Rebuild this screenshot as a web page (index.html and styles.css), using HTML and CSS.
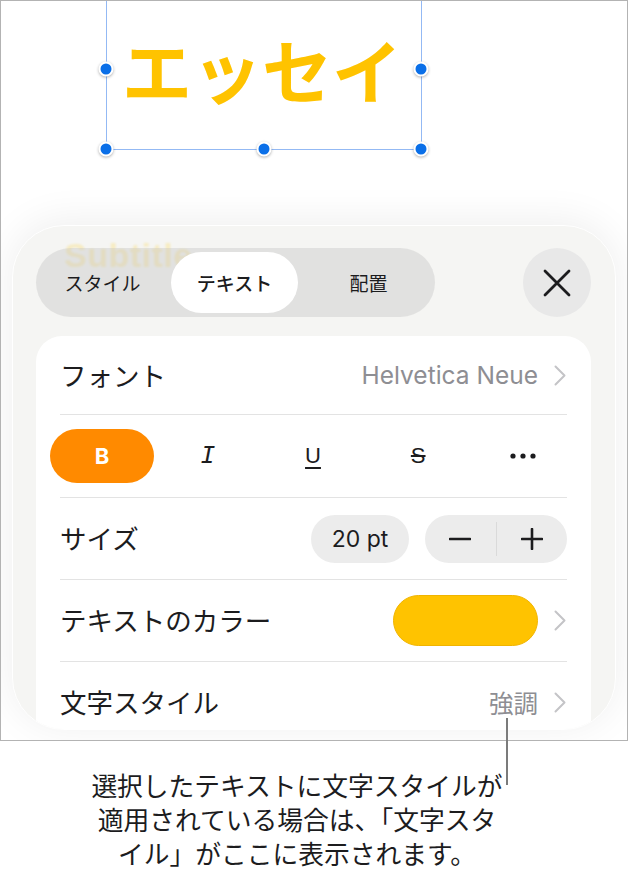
FILE: index.html
```html
<!DOCTYPE html>
<html>
<head>
    <title>テキストの書式</title>
    <link rel="stylesheet" href="styles.css">
</head>
<body>
    <div class="screen">
        <div class="canvas">
            <div class="textbox">
                <span class="title">エッセイ</span>
                <i class="handle h-top"></i>
                <i class="handle h-left"></i>
                <i class="handle h-right"></i>
                <i class="handle h-bl"></i>
                <i class="handle h-bottom"></i>
                <i class="handle h-br"></i>
            </div>
        </div>

        <div class="panel">
            <span class="ghost">Subtitle</span>
            <div class="panel-head">
                <div class="segmented">
                    <span class="seg">スタイル</span>
                    <span class="seg seg-on">テキスト</span>
                    <span class="seg">配置</span>
                </div>
                <button class="close">
                    <svg width="28" height="28" viewBox="0 0 28 28">
                        <path d="M2 2 L26 26 M26 2 L2 26" stroke="#1c1c1e" stroke-width="2.8" stroke-linecap="round" fill="none"/>
                    </svg>
                </button>
            </div>

            <div class="card">
                <div class="row">
                    <span class="label">フォント</span>
                    <span class="value">Helvetica Neue
                        <svg class="chev" width="12" height="21" viewBox="0 0 12 21"><path d="M1.5 1.5 L10.5 10.5 L1.5 19.5" stroke="#c4c4c7" stroke-width="2" fill="none" stroke-linecap="round" stroke-linejoin="round"/></svg>
                    </span>
                </div>

                <div class="row style-row">
                    <div class="fmt">
                        <span class="fmt-btn fmt-on">B</span>
                        <span class="fmt-btn fmt-i">I</span>
                        <span class="fmt-btn fmt-u">U</span>
                        <span class="fmt-btn fmt-s">S</span>
                        <span class="fmt-btn">
                            <svg width="26" height="6" viewBox="0 0 26 6"><circle cx="3" cy="3" r="2.6" fill="#1c1c1e"/><circle cx="13" cy="3" r="2.6" fill="#1c1c1e"/><circle cx="23" cy="3" r="2.6" fill="#1c1c1e"/></svg>
                        </span>
                    </div>
                </div>

                <div class="row">
                    <span class="label">サイズ</span>
                    <div class="size-ctl">
                        <span class="pill">20 pt</span>
                        <div class="stepper">
                            <span class="step">
                                <svg width="22" height="22" viewBox="0 0 22 22"><path d="M1 11 H21" stroke="#1c1c1e" stroke-width="2.6" stroke-linecap="round"/></svg>
                            </span>
                            <span class="step">
                                <svg width="22" height="22" viewBox="0 0 22 22"><path d="M1 11 H21 M11 1 V21" stroke="#1c1c1e" stroke-width="2.6" stroke-linecap="round"/></svg>
                            </span>
                        </div>
                    </div>
                </div>

                <div class="row">
                    <span class="label">テキストのカラー</span>
                    <span class="value">
                        <span class="swatch"></span>
                        <svg class="chev" width="12" height="21" viewBox="0 0 12 21"><path d="M1.5 1.5 L10.5 10.5 L1.5 19.5" stroke="#c4c4c7" stroke-width="2" fill="none" stroke-linecap="round" stroke-linejoin="round"/></svg>
                    </span>
                </div>

                <div class="row last">
                    <span class="label">文字スタイル</span>
                    <span class="value">強調
                        <svg class="chev" width="12" height="21" viewBox="0 0 12 21"><path d="M1.5 1.5 L10.5 10.5 L1.5 19.5" stroke="#c4c4c7" stroke-width="2" fill="none" stroke-linecap="round" stroke-linejoin="round"/></svg>
                    </span>
                </div>
            </div>
        </div>
    </div>

    <div class="callout-line"></div>
    <p class="caption">選択したテキストに文字スタイルが<br>適用されている場合は、「文字スタ<br>イル」がここに表示されます。</p>
</body>
</html>
```

FILE: styles.css
```css
body {
    margin: 0;
    width: 628px;
    background: #fff;
    font-family: "Inter", "Noto Sans CJK JP", sans-serif;
    color: #1c1c1e;
    position: relative;
}

.screen {
    box-sizing: border-box;
    width: 628px;
    height: 741px;
    border: 1px solid #b3b3b3;
    overflow: hidden;
    background: #fff;
}

/* text box on the page */
.canvas {
    display: flow-root;
    height: 149px;
}

.textbox {
    box-sizing: border-box;
    position: relative;
    margin: -14px 0 0 105px;
    width: 316px;
    height: 163px;
    border: 1px solid #93b9f4;
    display: flex;
    align-items: center;
    justify-content: center;
}

.title {
    font-family: "Noto Sans CJK JP", sans-serif;
    font-weight: 700;
    font-size: 70px;
    line-height: 1;
    color: #ffc300;
    margin-left: -4px;
}

.handle {
    position: absolute;
    width: 11px;
    height: 11px;
    border-radius: 50%;
    background: #0a6fe8;
    border: 2px solid #fff;
    box-shadow: 0 1px 3px rgba(0, 0, 0, 0.3);
    transform: translate(-50%, -50%);
}

.h-top { left: 50%; top: 0; }
.h-left { left: -1px; top: 50%; }
.h-right { left: 100%; top: 50%; }
.h-bl { left: -1px; top: 100%; }
.h-bottom { left: 50%; top: 100%; }
.h-br { left: 100%; top: 100%; }

/* inspector panel */
.panel {
    position: relative;
    margin: 75px 11px 0 11px;
    height: 505px;
    box-sizing: border-box;
    padding: 22px 24px 0 23px;
    border-radius: 52px;
    background: #f5f5f3;
    border: 1.5px solid #fff;
    box-shadow: 0 -4px 40px rgba(0, 0, 0, 0.07);
    overflow: hidden;
}

/* page text showing through the frosted panel */
.ghost {
    position: absolute;
    left: 51px;
    top: 15px;
    font-family: "Liberation Sans", sans-serif;
    font-weight: 700;
    font-size: 34px;
    line-height: 28px;
    letter-spacing: 0.5px;
    color: rgba(255, 200, 0, 0.2);
    filter: blur(1.2px);
}

.panel-head {
    position: relative;
    display: flex;
    justify-content: space-between;
    align-items: center;
}

.segmented {
    display: flex;
    width: 399px;
    height: 69px;
    box-sizing: border-box;
    padding: 4px 3px;
    border-radius: 35px;
    background: rgba(190, 190, 190, 0.36);
}

.seg {
    flex: 1;
    display: flex;
    align-items: center;
    justify-content: center;
    font-family: "Noto Sans CJK JP", sans-serif;
    font-size: 19px;
    line-height: 1;
    border-radius: 31px;
}

.seg:first-child {
    padding-right: 4px;
}

.seg-on {
    background: #fff;
    font-weight: 500;
    margin: 0 3px 0 1px;
}

.seg:last-child {
    padding-left: 4px;
}

.close {
    width: 68px;
    height: 69px;
    border: none;
    border-radius: 50%;
    background: #e8e8e8;
    padding: 0;
    display: flex;
    align-items: center;
    justify-content: center;
}

.card {
    position: relative;
    margin-top: 19px;
    background: #fff;
    border-radius: 26px;
    padding-bottom: 40px;
}

.row {
    margin: 0 24px;
    height: 81px;
    border-bottom: 1px solid #e3e3e3;
    display: flex;
    align-items: center;
    justify-content: space-between;
}

.row:first-child {
    height: 78px;
}

.row.last {
    border-bottom: none;
}

.label {
    font-family: "Noto Sans CJK JP", sans-serif;
    font-size: 26.5px;
    line-height: 1;
}

.value {
    display: flex;
    align-items: center;
    gap: 16px;
    font-size: 24.5px;
    color: #8e8e93;
    margin-right: 1px;
}

.value .chev {
    flex: none;
}

.style-row {
    height: 82px;
}

.fmt {
    flex: 1;
    display: grid;
    grid-template-columns: repeat(5, 1fr);
    margin: 0 -9px 0 -10px;
}

.fmt-btn {
    height: 54px;
    display: flex;
    align-items: center;
    justify-content: center;
    font-size: 22px;
    border-radius: 27px;
}

.fmt-on {
    background: #ff8a00;
    color: #fff;
    font-weight: 700;
    margin-right: 1px;
}

.fmt-i {
    font-family: "Liberation Mono", monospace;
    font-style: italic;
    font-size: 25px;
}

.fmt-u {
    font-family: "Liberation Sans", sans-serif;
    text-decoration: underline;
    text-underline-offset: 4px;
    text-decoration-thickness: 2px;
}

.fmt-s {
    font-family: "Liberation Sans", sans-serif;
    text-decoration: line-through;
    text-decoration-thickness: 1.5px;
}

.size-ctl {
    display: flex;
    gap: 16px;
}

.pill {
    width: 98px;
    height: 48px;
    border-radius: 24px;
    background: #ececec;
    display: flex;
    align-items: center;
    justify-content: center;
    font-size: 23px;
    color: #1c1c1e;
}

.stepper {
    display: flex;
    width: 142px;
    height: 48px;
    border-radius: 24px;
    background: #ececec;
    align-items: center;
}

.step {
    flex: 1;
    display: flex;
    align-items: center;
    justify-content: center;
}

.step + .step {
    border-left: 1px solid #dadada;
    height: 34px;
}

.swatch {
    width: 145px;
    height: 51px;
    box-sizing: border-box;
    border-radius: 26px;
    background: #ffc300;
    border: 1px solid #f0b400;
}

.callout-line {
    position: absolute;
    left: 506px;
    top: 718px;
    width: 2px;
    height: 67px;
    background: #7b7b7b;
}

.caption {
    margin: 27px 0 0 82px;
    width: 430px;
    text-align: center;
    font-family: "Noto Sans CJK JP", sans-serif;
    font-size: 25.75px;
    line-height: 34px;
    color: #1c1c1e;
}
```
